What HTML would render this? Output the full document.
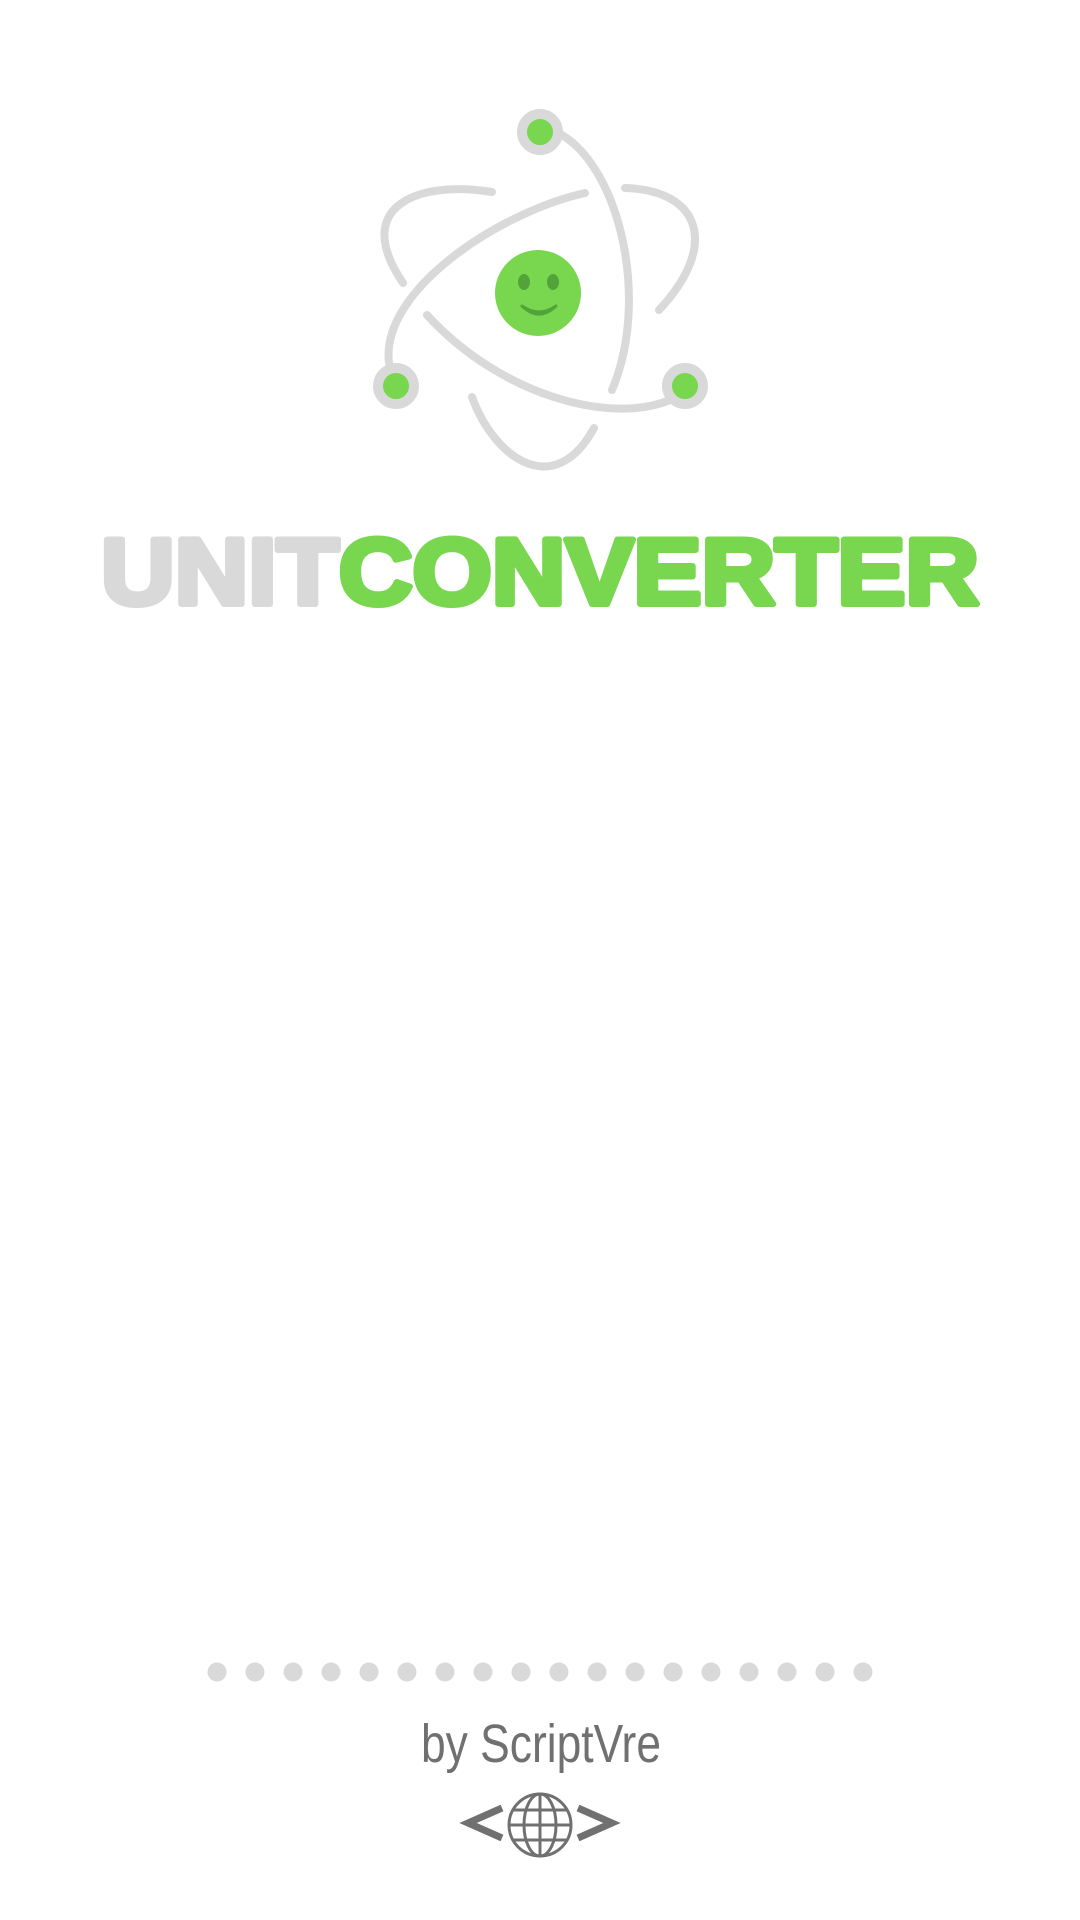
<!DOCTYPE html>
<html><head><style>
html,body{margin:0;padding:0;background:#fff;width:1080px;height:1920px;overflow:hidden}
svg{position:absolute;left:0;top:0}
</style></head><body>
<svg width="1080" height="1920" viewBox="0 0 1080 1920">
<g fill="none" stroke="#d9d9d9" stroke-width="8" stroke-linecap="round">
<path d="M562,135 C620,170 650,300 612,390"/>
<path d="M492,192 C420,180 350,205 403,283"/>
<path d="M585,193 C500,212 380,290 389,363"/>
<path d="M427,315 C500,395 610,425 670,400"/>
<path d="M625,188 C700,190 720,245 659,310"/>
<path d="M472,397 C495,460 555,500 594,428"/>
</g>
<g fill="#78d64f" stroke="#d9d9d9" stroke-width="10">
<circle cx="540" cy="132" r="18"/>
<circle cx="396" cy="386" r="18"/>
<circle cx="685" cy="386" r="18"/>
</g>
<circle cx="538" cy="293" r="43" fill="#78d64f"/>
<ellipse cx="524" cy="282" rx="6" ry="8" fill="#52a33a"/>
<ellipse cx="553" cy="282" rx="6" ry="8" fill="#52a33a"/>
<path d="M522,306 Q539,318 556,306 Q539,322 522,306Z" fill="#52a33a" stroke="#52a33a" stroke-width="3" stroke-linejoin="round"/>
<text x="101" y="604" textLength="878" lengthAdjust="spacingAndGlyphs" font-family="Liberation Sans, sans-serif" font-weight="bold" font-size="94" stroke-width="6" stroke-linejoin="round"><tspan fill="#d9d9d9" stroke="#d9d9d9">UNIT</tspan><tspan fill="#78d64f" stroke="#78d64f">CONVERTER</tspan></text>
<g fill="#d9d9d9">
<circle cx="217" cy="1672" r="9.5"/><circle cx="255" cy="1672" r="9.5"/><circle cx="293" cy="1672" r="9.5"/><circle cx="331" cy="1672" r="9.5"/><circle cx="369" cy="1672" r="9.5"/><circle cx="407" cy="1672" r="9.5"/><circle cx="445" cy="1672" r="9.5"/><circle cx="483" cy="1672" r="9.5"/><circle cx="521" cy="1672" r="9.5"/><circle cx="559" cy="1672" r="9.5"/><circle cx="597" cy="1672" r="9.5"/><circle cx="635" cy="1672" r="9.5"/><circle cx="673" cy="1672" r="9.5"/><circle cx="711" cy="1672" r="9.5"/><circle cx="749" cy="1672" r="9.5"/><circle cx="787" cy="1672" r="9.5"/><circle cx="825" cy="1672" r="9.5"/><circle cx="863" cy="1672" r="9.5"/>
</g>
<text x="421" y="1762" textLength="240" lengthAdjust="spacingAndGlyphs" font-family="Liberation Sans, sans-serif" font-size="54" fill="#707070">by ScriptVre</text>
<g fill="none" stroke="#707070">
<path d="M502,1808 L468,1823 L502,1838" stroke-width="7"/>
<path d="M578,1808 L612,1823 L578,1838" stroke-width="7"/>
<circle cx="540" cy="1825" r="31" stroke-width="3"/>
<path d="M540,1794 V1856 M509,1825 H571 M513,1810 H567 M513,1840 H567" stroke-width="3"/>
<ellipse cx="540" cy="1825" rx="16" ry="31" stroke-width="3"/>
</g>
</svg>
</body></html>
